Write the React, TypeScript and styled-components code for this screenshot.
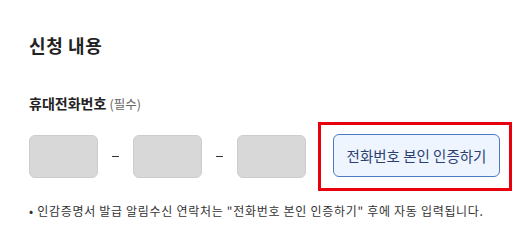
import { createGlobalStyle } from "styled-components";
import styled from "styled-components";

const GlobalStyle = createGlobalStyle`
  body {
    margin: 0;
    background: #ffffff;
    font-family: "Noto Sans CJK KR", "Noto Sans", sans-serif;
    color: #222222;
  }
`;

export default function App() {
  return (
    <>
      <GlobalStyle />
      <Section>
        <Title>신청 내용</Title>
        <Label>
          휴대전화번호 <small>(필수)</small>
        </Label>
        <PhoneRow>
          <PhoneBox />
          <Dash />
          <PhoneBox />
          <Dash />
          <PhoneBox />
          <Highlight>
            <VerifyButton type="button">전화번호 본인 인증하기</VerifyButton>
          </Highlight>
        </PhoneRow>
        <Note>• 인감증명서 발급 알림수신 연락처는 "전화번호 본인 인증하기" 후에 자동 입력됩니다.</Note>
      </Section>
    </>
  );
}

const Section = styled.div`
  padding: 30px 0 0 29px;
  width: 532px;
  box-sizing: border-box;
`;

const Title = styled.h2`
  margin: 0;
  font-size: 18px;
  font-weight: 700;
  letter-spacing: 0.6px;
  line-height: 30px;
  color: #222;
`;

const Label = styled.div`
  margin-top: 33px;
  font-size: 14px;
  font-weight: 700;
  line-height: 20px;
  color: #222;
  small {
    font-size: 12.5px;
    font-weight: 400;
    color: #666;
  }
`;

const PhoneRow = styled.div`
  display: flex;
  align-items: center;
  margin-top: 8px;
`;

const PhoneBox = styled.div`
  width: 69px;
  height: 43px;
  box-sizing: border-box;
  background: #d8d8d8;
  border: 1px solid #cdcdcd;
  border-radius: 6px;
`;

const Dash = styled.span`
  width: 7px;
  height: 1px;
  margin: 0 14px;
  background: #333;
`;

const Highlight = styled.div`
  margin-left: 12px;
  padding: 9px 9px 11px 12px;
  border: 3px solid #e8000f;
`;

const VerifyButton = styled.button`
  display: block;
  width: 167px;
  height: 43px;
  box-sizing: border-box;
  background: #eef5ff;
  border: 1px solid #4d7bc3;
  border-radius: 6px;
  font-family: inherit;
  font-size: 14.5px;
  color: #2c4170;
  cursor: pointer;
`;

const Note = styled.p`
  margin: 11px 0 0;
  font-size: 12px;
  letter-spacing: 0.7px;
  line-height: 18px;
  color: #333;
`;
